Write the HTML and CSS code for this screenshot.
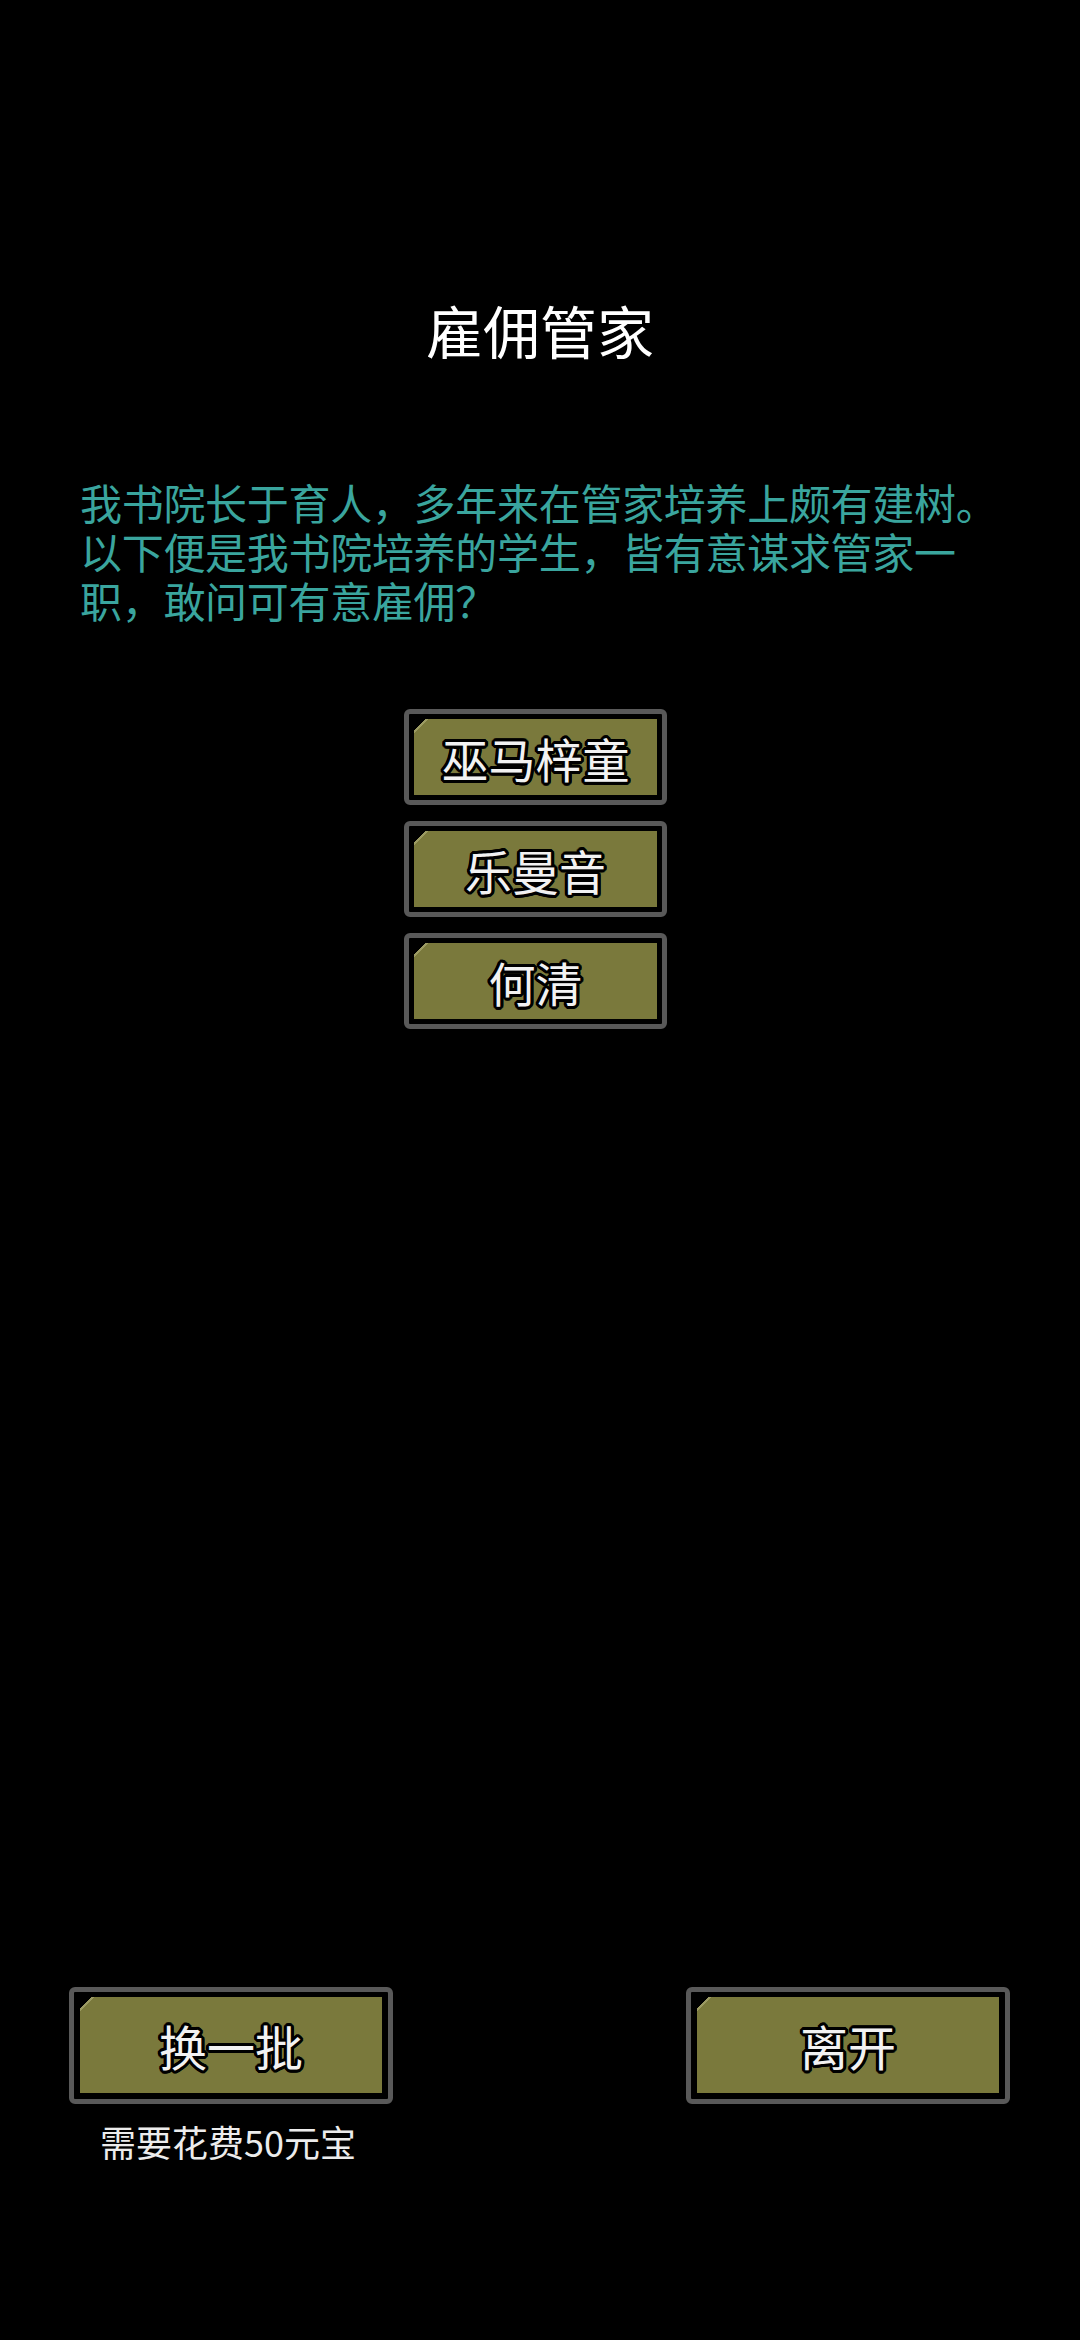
FILE: index.html
```html
<!DOCTYPE html>
<html lang="zh-CN">
<head>
<meta charset="utf-8">
<title>雇佣管家</title>
<link rel="stylesheet" href="styles.css">
</head>
<body>
<div class="screen">
  <h1 class="title">雇佣管家</h1>
  <p class="intro">我书院长于育人，多年来在管家培养上颇有建树。<br>以下便是我书院培养的学生，皆有意谋求管家一<br>职，敢问可有意雇佣？</p>
  <div class="options">
    <div class="btn btn-option"><div class="btn-face">巫马梓童</div></div>
    <div class="btn btn-option"><div class="btn-face">乐曼音</div></div>
    <div class="btn btn-option"><div class="btn-face">何清</div></div>
  </div>
  <div class="footer">
    <div class="footer-col">
      <div class="btn btn-large"><div class="btn-face">换一批</div></div>
      <div class="cost">需要花费50元宝</div>
    </div>
    <div class="footer-col">
      <div class="btn btn-large"><div class="btn-face">离开</div></div>
    </div>
  </div>
</div>
</body>
</html>
```

FILE: styles.css
```css
html, body {
  margin: 0;
  padding: 0;
  background: #000;
}

body {
  width: 1080px;
  height: 2340px;
  overflow: hidden;
  font-family: "Noto Sans CJK SC", "Noto Sans", sans-serif;
}

.screen {
  display: flex;
  flex-direction: column;
  width: 1080px;
  height: 2340px;
}

.title {
  margin: 296px 0 0 0;
  font-size: 57px;
  line-height: 67px;
  font-weight: 400;
  color: #ffffff;
  text-align: center;
}

.intro {
  margin: 114px 0 0 0;
  padding-left: 80px;
  font-size: 42px;
  line-height: 49px;
  color: #3aa59e;
  letter-spacing: -0.3px;
}

.options {
  display: flex;
  flex-direction: column;
  align-items: center;
  gap: 16px;
  margin-top: 85px;
  padding-right: 9px;
}

.btn {
  box-sizing: border-box;
  border: 5px solid #595959;
  border-radius: 6px;
  background: #000;
  display: flex;
}

.btn-face {
  flex: 1;
  display: flex;
  align-items: center;
  justify-content: center;
  background: linear-gradient(135deg, transparent 0 8px, #9b9a62 8px 10px, #7a793c 10px);
  color: #f2f2f2;
  font-weight: 400;
  text-shadow:
    0 0 2px #000,
    3px 0 0 #000, -3px 0 0 #000, 0 3px 0 #000, 0 -3px 0 #000,
    2px 2px 0 #000, -2px -2px 0 #000, 2px -2px 0 #000, -2px 2px 0 #000,
    3px 1px 0 #000, -3px 1px 0 #000, 1px 3px 0 #000, 1px -3px 0 #000,
    3px -1px 0 #000, -3px -1px 0 #000, -1px 3px 0 #000, -1px -3px 0 #000;
}

.btn-option {
  width: 263px;
  height: 96px;
  padding: 5px;
}

.btn-option .btn-face {
  font-size: 47px;
  line-height: 1;
}

.btn-large {
  width: 324px;
  height: 117px;
  padding: 5px 6px 6px 6px;
}

.btn-large .btn-face {
  font-size: 48px;
  line-height: 1;
}

.footer {
  display: flex;
  justify-content: space-between;
  align-items: flex-start;
  margin-top: 958px;
  padding: 0 70px 0 69px;
}

.footer-col {
  display: flex;
  flex-direction: column;
  align-items: center;
}

.cost {
  margin-top: 16px;
  font-size: 36px;
  line-height: 42px;
  color: #ececec;
  padding-right: 6px;
}
```
